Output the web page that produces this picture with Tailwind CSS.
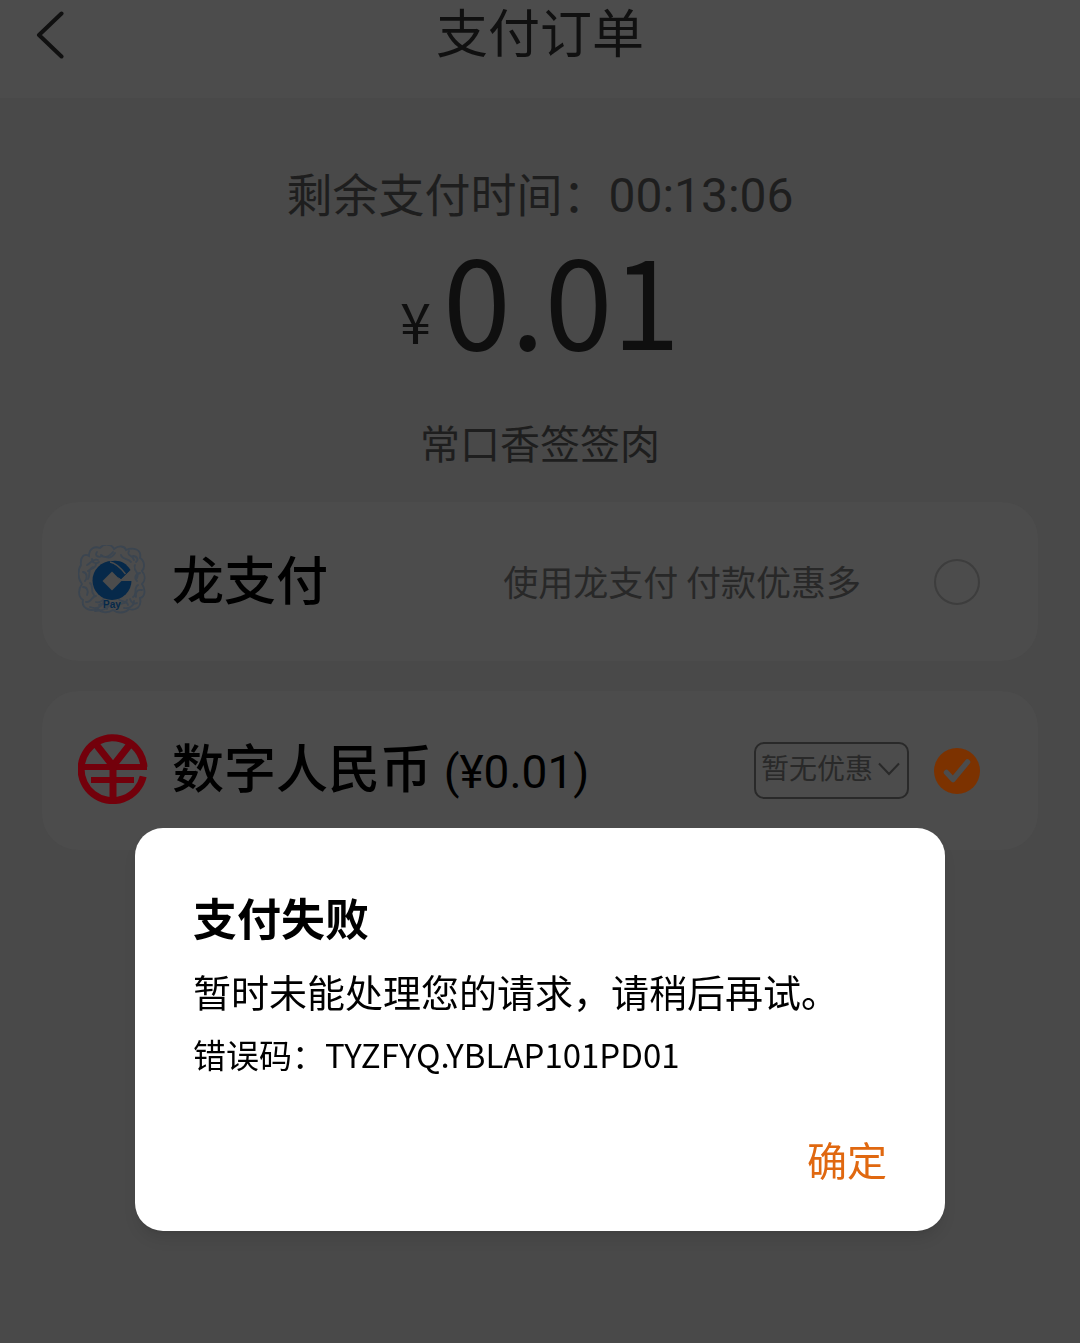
<!DOCTYPE html>
<html lang="zh-CN">
<head>
	<meta charset="UTF-8">
	<meta name="viewport" content="width=device-width, initial-scale=1.0">
	<title>支付订单</title>
	<script src="https://cdn.jsdelivr.net/npm/@tailwindcss/browser@4"></script>
</head>
<body class="bg-[#494949] font-['Noto_Sans_CJK_SC',sans-serif] text-black">
	<div class="min-h-screen">
		<!-- Header -->
		<header class="grid grid-cols-[1fr_auto_1fr] items-center bg-[#4c4c4c] px-9 pb-7">
			<button type="button" aria-label="返回" class="justify-self-start">
				<svg viewBox="0 0 28 48" class="w-7 h-12" fill="none" stroke="#101010" stroke-width="4" stroke-linecap="round" stroke-linejoin="round">
					<path d="M25.500 2.500 3 24l22.500 21.500"/>
				</svg>
			</button>
			<h1 class="font-['Liberation_Sans','Noto_Sans_CJK_SC',sans-serif] text-[52px] leading-[70px] text-[#101010]">支付订单</h1>
		</header>

		<main class="px-[42px]">
			<!-- Order summary -->
			<section class="pt-16 text-center">
				<p class="text-[46px] leading-[60px] text-[#1e1e1e]">剩余支付时间：<span class="font-[Roboto] text-[48px]">00:13:06</span></p>
				<p class="flex items-end justify-center gap-3 text-[#0f0f0f]">
					<span class="mb-5 text-[56px] leading-none">¥</span>
					<span class="text-[122px] leading-[142px]">0.01</span>
				</p>
				<p class="pt-11 text-[40px] leading-[60px] text-[#1e1e1e]">常口香签签肉</p>
			</section>

			<!-- Payment methods -->
			<form class="mt-[30px] space-y-[30px]">
				<div class="flex items-center h-[159px] rounded-[36px] bg-[#4c4c4c] pl-9 pr-[58px]">
					<div class="flex items-center gap-6 pb-1">
						<svg viewBox="0 0 70 70" class="w-[70px] h-[70px] shrink-0" aria-hidden="true">
							<!-- Dragon pattern -->
							<g fill="none" stroke="#3b4550" stroke-width="1.800" stroke-linecap="round">
								<path d="M3 20c-1-8 3-12 8-9 0-8 6-10 11-8 4-5 12-4 14 1 5-4 11-3 12 1 7-3 16-1 14 8 5 3 5 10 2 13 4 5 3 10 0 13 4 6 3 13-2 14 2 9-4 13-11 11-5 5-12 4-16 1-6 4-13 2-15-1-8 3-17-1-15-9-6-4-4-12-1-16-4-5-5-13-1-19z"/>
								<path d="M9 20c5-2 5-7 11-5M23 10c4 4 9 1 12-3M43 10c1 5 8 3 10 7M57 20c-3 5 5 7 2 13M60 40c-5 3 0 9-5 12M50 60c-1-5-8-2-10-7M29 64c2-6-5-6-8-4M8 57c6 1 5-6 10-6M5 42c4 0 6 4 4 8M5 27c5 1 4 7 2 9M14 14c0 4 4 5 7 3M62 28c-5 1-6 5-3 8M12 62c8 3 12-1 14-6M46 63c5 1 10-2 10-7"/>
								<path d="M15 22c-6 2-2 8-5 12M12 38c4 3 0 8 4 12M19 7c-3 4 2 6 5 4M51 6c-3 5 4 4 5 9M55 11c4 0 6 4 3 6M10 26c3-3 8-2 8-7M64 45c-5-1-7 3-6 7M18 57c3 1 7-1 8-4M40 60c4-3 8 0 9-5M28 12c4 2 7-1 9-4M59 58c-3 2-6-1-7-4M17 66c5-1 10 0 14-5"/>
							</g>
							<circle cx="34" cy="35.500" r="19.500" fill="#06294a"/>
							<path fill="#4c4c4c" d="M34 26.500 43.500 36 34 45.500 24.500 36z"/>
							<path fill="#4c4c4c" d="M42 36h14V21l-4 4-9 9-3-2z"/>
							<path fill="#06294a" d="M35 16c7-1 13 2 17.500 9L43 34l-6-5z"/>
							<path fill="none" stroke="#4c4c4c" stroke-width="1.300" d="M32 17c6 1 10 5 15.500 12"/>
							<text x="34" y="63" text-anchor="middle" font-family="Liberation Sans" font-size="10" font-weight="bold" fill="#06294a">Pay</text>
						</svg>
						<label for="long-pay" class="pb-1 text-[52px] font-medium whitespace-nowrap">龙支付</label>
					</div>
					<span class="ml-auto mr-[73px] text-[35px] whitespace-nowrap text-[#282828]">使用龙支付 付款优惠多</span>
					<input id="long-pay" type="radio" name="method" class="appearance-none w-[46px] h-[46px] shrink-0 rounded-full border-2 border-[#3d3d3d]">
				</div>

				<div class="flex items-center h-[159px] rounded-[36px] bg-[#4c4c4c] pl-9 pr-[58px]">
					<div class="flex items-center gap-6 pb-1">
						<svg viewBox="0 0 70 70" class="w-[70px] h-[70px] shrink-0" fill="none" stroke="#73000b" aria-hidden="true">
							<path stroke-width="7" d="M66 33A31.500 31.500 0 1 0 65.200 42.500"/>
							<path stroke-width="6" d="M3 33h66M13 46h43"/>
							<path stroke-width="7" d="M35 31v36M17 9l18 23L53 9"/>
						</svg>
						<label for="e-cny" class="pb-1 text-[52px] font-medium whitespace-nowrap">数字人民币 <span class="font-[Roboto] font-normal text-[46px]">(¥0.01)</span></label>
					</div>
					<div class="relative ml-auto mr-[25px]">
						<select aria-label="优惠" class="block appearance-none w-[155px] h-[57px] rounded-[10px] border-2 border-[#292929] bg-transparent pl-[5px] pb-2 text-[28px] text-[#292929]">
							<option>暂无优惠</option>
						</select>
						<svg viewBox="0 0 22 14" class="pointer-events-none absolute right-[9px] top-5 w-[22px] h-3.5" fill="none" stroke="#292929" stroke-width="2">
							<path d="M1 1.500 11 12 21 1.500"/>
						</svg>
					</div>
					<div class="relative w-[46px] h-[46px] shrink-0">
						<input id="e-cny" type="radio" name="method" checked class="block appearance-none w-full h-full rounded-full bg-[#7c3200]">
						<svg viewBox="0 0 46 46" class="pointer-events-none absolute inset-0" fill="none" stroke="#4c4c4c" stroke-width="5.500" stroke-linecap="round" stroke-linejoin="round">
							<path d="M12.500 24.500 19 31.500 33.500 14"/>
						</svg>
					</div>
				</div>
			</form>
		</main>
	</div>

	<!-- Payment failed dialog -->
	<div role="dialog" aria-modal="true" aria-labelledby="dialog-title" class="fixed inset-x-0 bottom-28 mx-auto w-3/4 rounded-[28px] bg-white px-[58px] pt-14 pb-[42px] shadow-lg">
		<h2 id="dialog-title" class="text-[44px] leading-[66px] font-bold">支付失败</h2>
		<p class="mt-2 text-[38px] leading-[66px] whitespace-nowrap">暂时未能处理您的请求，请稍后再试。</p>
		<p class="text-[33px] leading-[60px]">错误码：TYZFYQ.YBLAP101PD01</p>
		<div class="mt-[45px] flex justify-end">
			<button type="button" class="text-[40px] leading-[60px] text-[#e06810]">确定</button>
		</div>
	</div>
</body>
</html>
